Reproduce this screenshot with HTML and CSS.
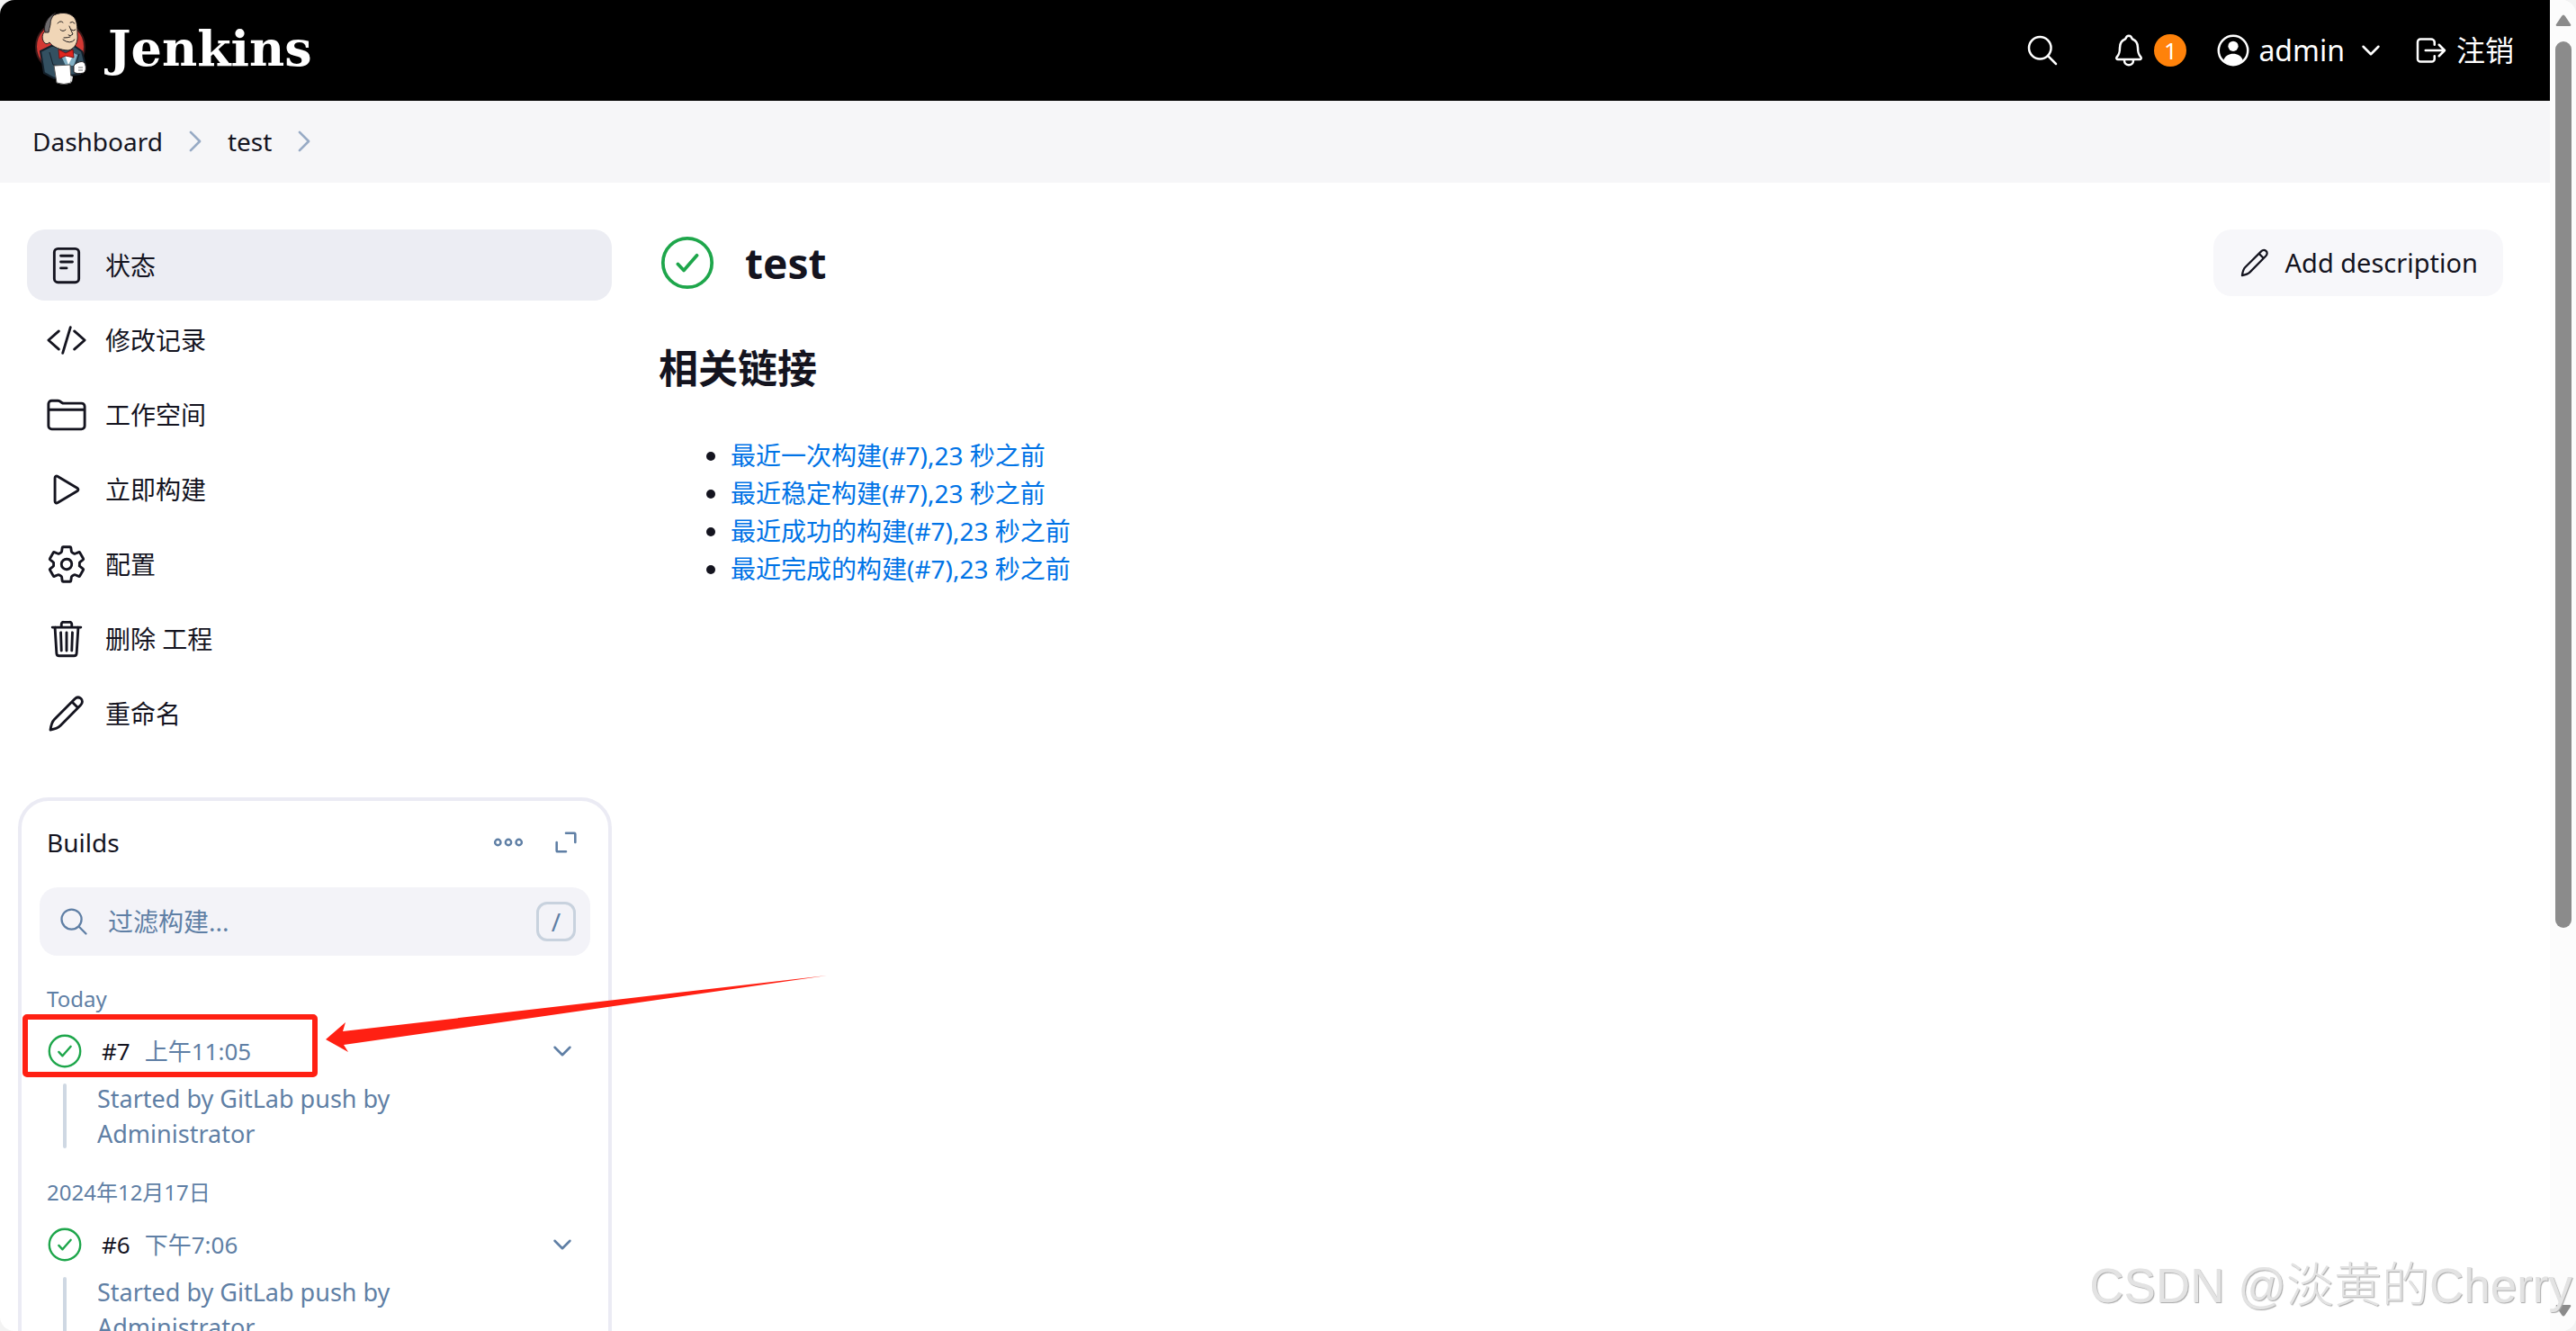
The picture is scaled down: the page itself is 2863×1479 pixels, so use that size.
FILE: index.html
```
<!DOCTYPE html>
<html lang="zh-CN">
<head>
    <meta charset="UTF-8">
    <meta name="viewport" content="width=device-width, initial-scale=1.0">
    <title>test [Jenkins]</title>
    <link rel="stylesheet" href="styles.css">
</head>
<body>

    <!-- shared icons -->
    <svg class="sprite" aria-hidden="true">
        <symbol id="i-search" viewBox="0 0 512 512"><path d="M221.09 64a157.09 157.09 0 10157.09 157.09A157.1 157.1 0 00221.09 64zM338.29 338.29L448 448" /></symbol>
        <symbol id="i-bell" viewBox="0 0 512 512"><path d="M427.68 351.43C402 320 383.87 304 383.87 217.35 383.87 138 343.35 109.73 310 96c-4.43-1.82-8.6-6-9.95-10.55C294.2 65.54 277.8 48 256 48s-38.21 17.55-44 37.47c-1.35 4.6-5.52 8.71-9.95 10.53-33.39 13.75-73.87 41.92-73.87 121.35C128.13 304 110 320 84.32 351.43 73.68 364.45 83 384 101.61 384h308.88c18.51 0 27.77-19.61 17.19-32.57zM320 384v16a64 64 0 01-128 0v-16" /></symbol>
        <symbol id="i-user" viewBox="0 0 512 512"><circle cx="256" cy="256" r="208" /><circle class="solid" cx="256" cy="196" r="72" /><path class="solid" d="M118 398C140 332 196 304 256 304s116 28 138 94c-36 38-84 58-138 58s-102-20-138-58z" /></symbol>
        <symbol id="i-down" viewBox="0 0 512 512"><path d="M112 184l144 144 144-144" /></symbol>
        <symbol id="i-right" viewBox="0 0 512 512"><path d="M184 112l144 144-144 144" /></symbol>
        <symbol id="i-logout" viewBox="0 0 512 512"><path d="M304 336v40a40 40 0 01-40 40H104a40 40 0 01-40-40V136a40 40 0 0140-40h152c22.09 0 48 17.91 48 40v40M368 336l80-80-80-80M176 256h256" /></symbol>
        <symbol id="i-doc" viewBox="0 0 512 512"><rect x="104" y="48" width="304" height="416" rx="44" /><path d="M184 136h144M184 212h144M184 288h72" /></symbol>
        <symbol id="i-code" viewBox="0 0 512 512"><path d="M160 368L32 256l128-112M352 368l128-112-128-112M304 96l-96 320" /></symbol>
        <symbol id="i-folder" viewBox="0 0 512 512"><path d="M440 432H72a40 40 0 01-40-40V120a40 40 0 0140-40h75.89a40 40 0 0122.19 6.72l27.84 18.56a40 40 0 0022.19 6.72H440a40 40 0 0140 40v240a40 40 0 01-40 40zM32 192h448" /></symbol>
        <symbol id="i-play" viewBox="0 0 512 512"><path d="M112 111v290c0 17.44 17 28.52 31 20.16l247.9-148.37c12.12-7.25 12.12-26.33 0-33.58L143 90.84c-14-8.36-31 2.72-31 20.16z" /></symbol>
        <symbol id="i-gear" viewBox="0 0 512 512"><path d="M262.29 192.31a64 64 0 1057.4 57.4 64.13 64.13 0 00-57.4-57.4zM416.39 256a154.34 154.34 0 01-1.53 20.79l45.21 35.46a10.81 10.81 0 012.45 13.75l-42.77 74a10.81 10.81 0 01-13.14 4.59l-44.9-18.08a16.11 16.11 0 00-15.17 1.75A164.48 164.48 0 01325 400.8a15.94 15.94 0 00-8.82 12.14l-6.73 47.89a11.08 11.08 0 01-10.68 9.17h-85.54a11.11 11.11 0 01-10.69-8.87l-6.72-47.82a16.07 16.07 0 00-9-12.22 155.3 155.3 0 01-21.46-12.57 16 16 0 00-15.11-1.71l-44.89 18.07a10.81 10.81 0 01-13.14-4.58l-42.77-74a10.8 10.8 0 012.45-13.75l38.21-30a16.05 16.05 0 006-14.08c-.36-4.17-.58-8.33-.58-12.5s.21-8.27.58-12.35a16 16 0 00-6.07-13.94l-38.19-30A10.81 10.81 0 0149.48 186l42.77-74a10.81 10.81 0 0113.14-4.59l44.9 18.08a16.11 16.11 0 0015.17-1.75A164.48 164.48 0 01187 111.2a15.94 15.94 0 008.82-12.14l6.73-47.89A11.08 11.08 0 01213.23 42h85.54a11.11 11.11 0 0110.69 8.87l6.72 47.82a16.07 16.07 0 009 12.22 155.3 155.3 0 0121.46 12.57 16 16 0 0015.11 1.71l44.89-18.07a10.81 10.81 0 0113.14 4.58l42.77 74a10.8 10.8 0 01-2.45 13.75l-38.21 30a16.05 16.05 0 00-6.05 14.08c.33 4.14.55 8.3.55 12.47z" /></symbol>
        <symbol id="i-trash" viewBox="0 0 512 512"><path d="M112 112l20 320c.95 18.49 14.4 32 32 32h184c17.67 0 30.87-13.51 32-32l20-320M80 112h352M192 112V72a23.93 23.93 0 0124-24h80a23.93 23.93 0 0124 24v40M256 176v224M184 176l8 224M328 176l-8 224" /></symbol>
        <symbol id="i-pencil" viewBox="0 0 512 512"><path d="M56 456C64 400 76 356 104 328L356 76c26-26 56-26 78-6s22 54-4 80L180 404c-28 28-72 44-124 52zM324 112l72 72" /></symbol>
        <symbol id="i-ok" viewBox="0 0 512 512"><circle cx="256" cy="256" r="232" /><path d="M166 268l56 60 124-142" /></symbol>
        <symbol id="i-more" viewBox="0 0 512 512"><circle cx="80" cy="256" r="48" /><circle cx="256" cy="256" r="48" /><circle cx="432" cy="256" r="48" /></symbol>
        <symbol id="i-expand" viewBox="0 0 512 512"><path d="M256 80h160a16 16 0 0116 16v160M80 256v160a16 16 0 0016 16h160" /></symbol>
    </svg>

    <div class="window">
        <div class="page">
            <header class="header">
                <a class="brand" href="#">
                    <svg class="brand-logo" viewBox="0 0 60 84" aria-hidden="true">
                        <circle cx="29" cy="40" r="27" fill="#d33833" stroke="#3a1a1a" stroke-width="2" />
                        <path d="M7 45l12-6 24-1 10 7 4 16-6 9-29 5-11-6z" fill="#335061" stroke="#14202b" stroke-width="2" />
                        <path d="M29 48l6 13h9l4-12-6-3z" fill="#81b0c4" />
                        <path d="M34 49l4 11 5-10z" fill="#fff" />
                        <path d="M17 46l4 14 20 2M50 48l-4 13" stroke="#14202b" stroke-width="1" fill="none" />
                        <path d="M12 36C8 33 8 24 13 23c0-5 0-10 4-14C22 2 36 0 43 6c5 4 5 13 5 20 1 8-2 16-10 18-8 0-18-4-21-9-2 2-4 2-5 1z" fill="#f0d6b7" stroke="#231f20" stroke-width="1" />
                        <path d="M12 24c-2-8 2-17 12-22-4 4-6 8-6 13-1 3-1 6-2 9z" fill="#6d6b6d" stroke="#231f20" stroke-width="1" />
                        <path d="M26 14q3-4 6-1M40 13q3-2 5 1M29 21q3 3 6 0M41 21q3 2 5 0M39 17q2 5 4 9-3 3-5 1M32 32q8 6 13 0M33 30q5 0 7-1" fill="none" stroke="#231f20" stroke-width="1" stroke-linecap="round" />
                        <path d="M27 43l8 4 8-4 1 9-9-2-7 3z" fill="#e0261f" stroke="#7a1111" stroke-width="1" />
                        <path d="M44 61c3-4 10-6 12-3 2 4 2 9-1 11-4 1-9 1-11-1z" fill="#fff" stroke="#231f20" stroke-width="1" />
                        <path d="M49 63h5M49 66h5" stroke="#777" stroke-width="1" />
                        <path d="M22 61l18-1 1 20q-8 3-16 0z" fill="#fff" stroke="#555" stroke-width="1" />
                        <path d="M40 72l3 1-1 6-2-1z" fill="#ddd" />
                    </svg>
                    <span class="brand-name">Jenkins</span>
                </a>
                <div class="header-tools">
                    <button class="icon-button" aria-label="Search"><svg class="icon tool-icon"><use href="#i-search" /></svg></button>
                    <button class="alerts" aria-label="Alerts"><svg class="icon tool-icon"><use href="#i-bell" /></svg><span class="badge">1</span></button>
                    <a class="user" href="#"><svg class="icon tool-icon"><use href="#i-user" /></svg>admin<svg class="icon small-icon"><use href="#i-down" /></svg></a>
                    <a class="logout" href="#"><svg class="icon tool-icon"><use href="#i-logout" /></svg>注销</a>
                </div>
            </header>

            <nav class="breadcrumbs" aria-label="Breadcrumb">
                <a href="#">Dashboard</a>
                <svg class="icon crumb-icon"><use href="#i-right" /></svg>
                <a href="#">test</a>
                <svg class="icon crumb-icon"><use href="#i-right" /></svg>
            </nav>

            <div class="content">
                <aside class="side-panel">
                    <nav class="tasks">
                        <a class="task active" href="#"><svg class="icon task-icon"><use href="#i-doc" /></svg>状态</a>
                        <a class="task" href="#"><svg class="icon task-icon"><use href="#i-code" /></svg>修改记录</a>
                        <a class="task" href="#"><svg class="icon task-icon"><use href="#i-folder" /></svg>工作空间</a>
                        <a class="task" href="#"><svg class="icon task-icon"><use href="#i-play" /></svg>立即构建</a>
                        <a class="task" href="#"><svg class="icon task-icon"><use href="#i-gear" /></svg>配置</a>
                        <a class="task" href="#"><svg class="icon task-icon"><use href="#i-trash" /></svg>删除 工程</a>
                        <a class="task" href="#"><svg class="icon task-icon"><use href="#i-pencil" /></svg>重命名</a>
                    </nav>

                    <section class="builds">
                        <div class="builds-header">
                            <h2>Builds</h2>
                            <button class="icon-button" aria-label="More"><svg class="icon more-icon"><use href="#i-more" /></svg></button>
                            <button class="icon-button" aria-label="Expand"><svg class="icon expand-icon"><use href="#i-expand" /></svg></button>
                        </div>
                        <div class="filter">
                            <svg class="icon filter-icon"><use href="#i-search" /></svg>
                            <input type="text" placeholder="过滤构建..." aria-label="过滤构建">
                            <kbd>/</kbd>
                        </div>

                        <h3 class="build-day">Today</h3>
                        <div class="build">
                            <div class="build-row">
                                <svg class="icon ok build-ok"><use href="#i-ok" /></svg>
                                <a class="build-number" href="#">#7</a>
                                <a class="build-time" href="#">上午11:05</a>
                                <button class="icon-button" aria-label="Build #7 menu"><svg class="icon small-icon"><use href="#i-down" /></svg></button>
                            </div>
                            <p class="build-cause">Started by GitLab push by Administrator</p>
                            <div class="mark-box"></div>
                            <svg class="mark-arrow" viewBox="0 0 560 90" aria-hidden="true"><path d="M1 74l22-19-3 10L558 3 21 80l5 8z" /></svg>
                        </div>

                        <h3 class="build-day">2024年12月17日</h3>
                        <div class="build">
                            <div class="build-row">
                                <svg class="icon ok build-ok"><use href="#i-ok" /></svg>
                                <a class="build-number" href="#">#6</a>
                                <a class="build-time" href="#">下午7:06</a>
                                <button class="icon-button" aria-label="Build #6 menu"><svg class="icon small-icon"><use href="#i-down" /></svg></button>
                            </div>
                            <p class="build-cause">Started by GitLab push by Administrator</p>
                        </div>
                    </section>
                </aside>

                <main class="main-panel">
                    <div class="title-bar">
                        <svg class="icon ok title-ok"><use href="#i-ok" /></svg>
                        <h1>test</h1>
                        <button class="describe"><svg class="icon describe-icon"><use href="#i-pencil" /></svg>Add description</button>
                    </div>
                    <h2 class="links-title">相关链接</h2>
                    <ul class="links">
                        <li><a href="#">最近一次构建(#7),23 秒之前</a></li>
                        <li><a href="#">最近稳定构建(#7),23 秒之前</a></li>
                        <li><a href="#">最近成功的构建(#7),23 秒之前</a></li>
                        <li><a href="#">最近完成的构建(#7),23 秒之前</a></li>
                    </ul>
                </main>
            </div>
        </div>

        <div class="scrollbar">
            <svg class="scroll-arrow" viewBox="0 0 18 14"><path d="M2 13h14q2 0 1-2L11 2q-2-3-4 0L1 11q-1 2 1 2z" /></svg>
            <div class="scroll-track"><div class="scroll-thumb"></div></div>
            <svg class="scroll-arrow" viewBox="0 0 18 14"><path d="M2 1h14q2 0 1 2l-6 9q-2 3-4 0L1 3q-1-2 1-2z" /></svg>
        </div>
    </div>

    <div class="watermark">CSDN @淡黄的Cherry</div>

</body>
</html>
```
FILE: styles.css
```
* {
    box-sizing: border-box;
}

body {
    margin: 0;
    background: #f3f3f3;
    color: #14141f;
    font-family: "Noto Sans", "Noto Sans CJK SC", sans-serif;
    font-size: 28px;
    line-height: 42px;
}

h1, h2, h3, p, ul {
    margin: 0;
}

a {
    color: inherit;
    text-decoration: none;
}

button {
    padding: 0;
    border: none;
    background: none;
    color: inherit;
    font: inherit;
    cursor: pointer;
}

.sprite {
    position: absolute;
    width: 0;
    height: 0;
}

.icon {
    flex: none;
    fill: none;
    stroke: currentColor;
    stroke-width: 32;
    stroke-linecap: round;
    stroke-linejoin: round;
}

.solid {
    fill: currentColor;
    stroke: none;
}

.icon-button {
    display: flex;
}

.ok {
    color: #1ea64b;
}

.small-icon {
    width: 30px;
    height: 30px;
    stroke-width: 44;
}

.window {
    display: flex;
    height: 100vh;
    overflow: hidden;
    border-radius: 16px;
    background: #fff;
}

.page {
    flex: 1;
    min-width: 0;
}

/* header */
.header {
    display: flex;
    align-items: center;
    justify-content: space-between;
    height: 112px;
    padding: 0 40px 0 38px;
    background: #000;
    color: #fff;
    font-size: 32px;
}

.brand {
    display: flex;
    align-items: center;
    gap: 22px;
    padding-bottom: 4px;
}

.brand-logo {
    width: 60px;
    height: 84px;
}

.brand-name {
    font-family: "DejaVu Serif", serif;
    font-size: 54px;
    font-weight: bold;
    line-height: 60px;
}

.header-tools {
    display: flex;
    align-items: center;
}

.tool-icon {
    width: 40px;
    height: 40px;
}

.alerts {
    display: flex;
    align-items: center;
    gap: 8px;
    margin: 0 32px 0 56px;
}

.badge {
    width: 36px;
    height: 36px;
    border-radius: 50%;
    background: #ff820a;
    font-size: 26px;
    line-height: 36px;
}

.user, .logout {
    display: flex;
    align-items: center;
    gap: 8px;
}

.user {
    margin-right: 32px;
}

.user .small-icon {
    margin-left: 6px;
}

/* breadcrumbs */
.breadcrumbs {
    display: flex;
    align-items: center;
    gap: 18px;
    height: 91px;
    padding: 0 36px 2px;
    background: #f6f6f8;
}

.crumb-icon {
    width: 36px;
    height: 36px;
    color: #98abc5;
    stroke-width: 38;
}

/* page body */
.content {
    display: flex;
    gap: 52px;
    padding: 52px 52px 0 30px;
}

.side-panel {
    flex: none;
    width: 650px;
}

.tasks {
    display: flex;
    flex-direction: column;
    gap: 4px;
}

.task {
    display: flex;
    align-items: center;
    gap: 20px;
    height: 79px;
    padding: 0 21px;
    border-radius: 20px;
}

.task.active {
    background: #ecedf3;
}

.task-icon {
    width: 46px;
    height: 46px;
}

/* builds */
.builds {
    margin: 54px 0 0 -10px;
    padding: 16px 20px;
    border: 4px solid #ebebf4;
    border-radius: 34px;
}

.builds-header {
    display: flex;
    align-items: center;
    gap: 32px;
    height: 60px;
    padding: 0 12px 0 8px;
    color: #5f7fa5;
}

.builds-header h2 {
    flex: 1;
    color: #14141f;
    font-size: 28px;
    font-weight: normal;
}

.more-icon {
    width: 34px;
    height: 34px;
    stroke-width: 36;
}

.expand-icon {
    width: 30px;
    height: 30px;
    stroke-width: 44;
}

.filter {
    display: flex;
    align-items: center;
    gap: 20px;
    height: 76px;
    margin: 20px 0 30px;
    padding: 0 16px 0 20px;
    border-radius: 20px;
    background: #f3f3f8;
    color: #5f7fa5;
}

.filter-icon {
    width: 36px;
    height: 36px;
}

.filter input {
    flex: 1;
    min-width: 0;
    padding: 0;
    border: none;
    outline: none;
    background: none;
    color: #14141f;
    font: inherit;
}

.filter input::placeholder {
    color: #5f7fa5;
}

.filter kbd {
    width: 44px;
    height: 44px;
    border: 3px solid #c8d2de;
    border-radius: 12px;
    font: inherit;
    line-height: 38px;
    text-align: center;
}

.build-day {
    margin: 28px 0 16px;
    padding-left: 8px;
    color: #5f7fa5;
    font-size: 24px;
    font-weight: normal;
    line-height: 36px;
}

.build {
    position: relative;
    color: #5f7fa5;
    font-size: 26px;
}

.build-row {
    display: flex;
    align-items: center;
    height: 48px;
    padding: 0 16px 0 9px;
}

.build-ok {
    width: 38px;
    height: 38px;
}

.build-number {
    margin: 0 16px 0 22px;
    color: #14141f;
}

.build-time {
    flex: 1;
}

.build-cause {
    position: relative;
    max-width: 420px;
    margin: 9px 0 0 26px;
    padding-left: 38px;
    font-size: 27px;
    line-height: 39px;
}

.build-cause::before {
    content: "";
    position: absolute;
    top: 3px;
    bottom: 3px;
    left: 0;
    width: 4px;
    border-radius: 2px;
    background: #cfd8e3;
}

/* red marks over build #7 */
.mark-box {
    position: absolute;
    top: -17px;
    left: -19px;
    width: 328px;
    height: 70px;
    border: 6px solid #ff2013;
    border-radius: 5px;
}

.mark-arrow {
    position: absolute;
    top: -63px;
    left: 317px;
    width: 560px;
    height: 90px;
    fill: #ff2013;
}

/* main panel */
.main-panel {
    flex: 1;
    min-width: 0;
}

.title-bar {
    display: flex;
    align-items: center;
    height: 74px;
}

.title-ok {
    width: 64px;
    height: 60px;
}

.title-bar h1 {
    flex: 1;
    margin-left: 32px;
    font-size: 46px;
    line-height: 60px;
}

.describe {
    display: flex;
    align-items: center;
    gap: 16px;
    height: 74px;
    padding: 0 28px;
    border-radius: 20px;
    background: #f7f7fa;
    font-size: 29px;
}

.describe-icon {
    width: 36px;
    height: 36px;
}

.links-title {
    margin-top: 50px;
    font-size: 44px;
    line-height: 60px;
}

.links {
    margin-top: 46px;
    padding-left: 80px;
}

.links li::marker {
    color: #14141f;
}

.links a {
    color: #0073e6;
}

/* scrollbar */
.scrollbar {
    display: flex;
    flex-direction: column;
    align-items: center;
    gap: 16px;
    width: 29px;
    padding: 16px 0;
    background: #fcfcfc;
}

.scroll-arrow {
    flex: none;
    width: 18px;
    height: 14px;
    fill: #8b8b8b;
}

.scroll-track {
    flex: 1;
    width: 18px;
}

.scroll-thumb {
    height: 71%;
    border-radius: 9px;
    background: #8b8b8b;
}

.watermark {
    position: fixed;
    right: 4px;
    bottom: 14px;
    color: #e3e3e3;
    font-family: "Liberation Sans", "Noto Sans CJK SC", sans-serif;
    font-size: 53px;
    font-weight: 300;
    line-height: 72px;
    text-shadow: 1px 1px 1px #a8a8a8;
}
```
